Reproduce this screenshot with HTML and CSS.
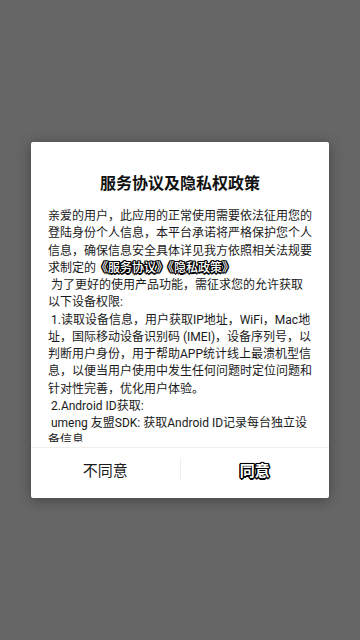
FILE: index.html
```html
<!DOCTYPE html>
<html lang="zh-CN">
	<head>
		<meta charset="utf-8" />
		<title>服务协议及隐私权政策</title>
		<link rel="stylesheet" href="styles.css">
	</head>
	<body>
		<div class="overlay">
			<div class="dialog">
				<h2 class="dialog-title">服务协议及隐私权政策</h2>
				<div class="dialog-body">
					<p>亲爱的用户，此应用的正常使用需要依法征用您的登陆身份个人信息，本平台承诺将严格保护您个人信息，确保信息安全具体详见我方依照相关法规要求制定的<span class="link">《服务协议》</span><span class="link">《隐私政策》</span></p>
					<p> 为了更好的使用产品功能，需征求您的允许获取以下设备权限:</p>
					<p> 1.读取设备信息，用户获取IP地址，WiFi，Mac地址，国际移动设备识别码 (IMEI)，设备序列号，以判断用户身份，用于帮助APP统计线上最溃机型信息，以便当用户使用中发生任何问题时定位问题和针对性完善，优化用户体验。</p>
					<p> 2.Android ID获取:</p>
					<p> umeng 友盟SDK: 获取Android ID记录每台独立设备信息</p>
				</div>
				<div class="dialog-footer">
					<button class="btn btn-cancel">不同意</button>
					<span class="sep"></span>
					<button class="btn btn-ok">同意</button>
				</div>
			</div>
		</div>
	</body>
</html>
```

FILE: styles.css
```css
html,
body {
	margin: 0;
	padding: 0;
}
body {
	font-family: Roboto, "Noto Sans CJK SC", sans-serif;
	color: #1a1a1a;
	background-color: #666;
}
.overlay {
	height: 640px;
	display: flex;
	justify-content: center;
	align-items: center;
}
.dialog {
	width: 298px;
	height: 356px;
	box-sizing: border-box;
	padding-top: 30px;
	background-color: #fff;
	border-radius: 2px;
	box-shadow: 0 2px 14px rgba(0, 0, 0, 0.35);
	display: flex;
	flex-direction: column;
}
.dialog-title {
	margin: 0;
	font-size: 16px;
	line-height: 24px;
	font-weight: bold;
	text-align: center;
	color: #111;
}
.dialog-body {
	margin-top: 12px;
	height: 234px;
	padding: 0 15px 0 17px;
	overflow-y: auto;
	scrollbar-width: none;
	font-size: 12px;
	line-height: 17.25px;
}
.dialog-body p {
	margin: 0;
	white-space: pre-wrap;
}
/* texte blanc cerné de noir */
.link,
.btn-ok {
	color: #fff;
	text-shadow: -1px -1px 0 #000, 1px -1px 0 #000, -1px 1px 0 #000,
		1px 1px 0 #000, 0 -1.5px 0 #000, 0 1.5px 0 #000, -1.5px 0 0 #000,
		1.5px 0 0 #000, 0 0 2px #000;
}
.link {
	font-weight: 500;
}
.dialog-footer {
	margin-top: 5px;
	border-top: 1px solid #eee;
	height: 50px;
	padding-bottom: 7px;
	box-sizing: border-box;
	display: flex;
	align-items: center;
}
.btn {
	flex: 1;
	height: 100%;
	border: none;
	background: none;
	font-family: inherit;
	font-size: 15px;
	color: #1a1a1a;
	cursor: pointer;
}
.btn-ok {
	font-weight: bold;
	color: #fff;
}
.sep {
	width: 1px;
	height: 22px;
	background-color: #eee;
}
```
